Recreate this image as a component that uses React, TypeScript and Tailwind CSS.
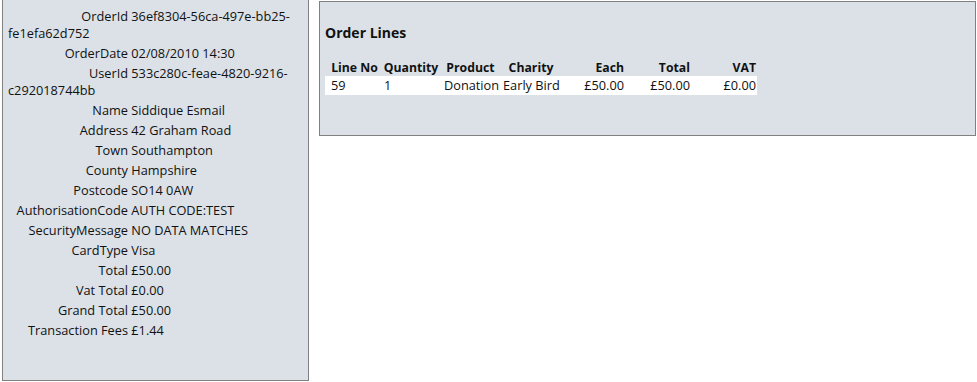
import React from "react";

type Field = { label: string; value: React.ReactNode };

const fields: Field[] = [
  {
    label: "OrderId",
    value: (
      <>
        36ef8304-56ca-497e-bb25-
        <br />
        fe1efa62d752
      </>
    ),
  },
  { label: "OrderDate", value: "02/08/2010 14:30" },
  {
    label: "UserId",
    value: (
      <>
        533c280c-feae-4820-9216-
        <br />
        c292018744bb
      </>
    ),
  },
  { label: "Name", value: "Siddique Esmail" },
  { label: "Address", value: "42 Graham Road" },
  { label: "Town", value: "Southampton" },
  { label: "County", value: "Hampshire" },
  { label: "Postcode", value: "SO14 0AW" },
  { label: "AuthorisationCode", value: "AUTH CODE:TEST" },
  { label: "SecurityMessage", value: "NO DATA MATCHES" },
  { label: "CardType", value: "Visa" },
  { label: "Total", value: "£50.00" },
  { label: "Vat Total", value: "£0.00" },
  { label: "Grand Total", value: "£50.00" },
  { label: "Transaction Fees", value: "£1.44" },
];

type Col = {
  title: string;
  width: string;
  pad: string;
  head: string;
  cell: string;
};

const cols: Col[] = [
  { title: "Line No", width: "w-[56px]", pad: "pl-[6px] pr-[3px]", head: "justify-center", cell: "text-left" },
  { title: "Quantity", width: "w-[60px]", pad: "px-[3px]", head: "justify-center", cell: "text-left" },
  { title: "Product", width: "w-[59px]", pad: "pl-[3px] pr-[3px]", head: "justify-center", cell: "text-left" },
  { title: "Charity", width: "w-[62px]", pad: "px-[3px]", head: "justify-center", cell: "text-left" },
  { title: "Each", width: "w-[65px]", pad: "pr-[3px]", head: "justify-end", cell: "text-right" },
  { title: "Total", width: "w-[66px]", pad: "pr-[3px]", head: "justify-end", cell: "text-right" },
  { title: "VAT", width: "w-[64px]", pad: "pr-[1px]", head: "justify-end", cell: "text-right" },
];

const line = ["59", "1", "Donation", "Early Bird", "£50.00", "£50.00", "£0.00"];

export default function App() {
  return (
    <div
      className="flex items-start bg-white text-[12.75px] leading-[17px] text-[#111] w-[977px] h-[382px] overflow-hidden"
      style={{ fontFamily: '"Open Sans", "Noto Sans", sans-serif' }}
    >
      {/* order summary */}
      <div className="ml-[2px] w-[307px] h-[381px] shrink-0 border border-t-0 border-[#808080] bg-[#dbe1e7] pl-[5px] pr-[3px] pt-[8px]">
        {fields.map((f) => (
          <div key={f.label} className="mb-[3px]">
            <span className="inline-block w-[120px] text-right">{f.label}</span>{" "}
            {f.value}
          </div>
        ))}
      </div>

      {/* order lines */}
      <div className="ml-[10px] mt-[1px] w-[657px] h-[135px] shrink-0 border border-[#808080] bg-[#dbe1e7] px-[5px] pt-[21px]">
        <h2 className="text-[14px] leading-[20px] font-bold">Order Lines</h2>
        <div className="mt-[15px]">
          <div className="flex font-bold text-[12.25px] h-[18px] items-center whitespace-nowrap">
            {cols.map((c) => (
              <div key={c.title} className={`${c.width} ${c.pad} shrink-0`}>
                <div className={`flex ${c.head}`}>
                  <span>{c.title}</span>
                </div>
              </div>
            ))}
          </div>
          <div className="flex bg-white w-fit h-[19px] items-center whitespace-nowrap">
            {cols.map((c, i) => (
              <div key={c.title} className={`${c.width} ${c.pad} ${c.cell} shrink-0`}>
                {line[i]}
              </div>
            ))}
          </div>
        </div>
      </div>
    </div>
  );
}
